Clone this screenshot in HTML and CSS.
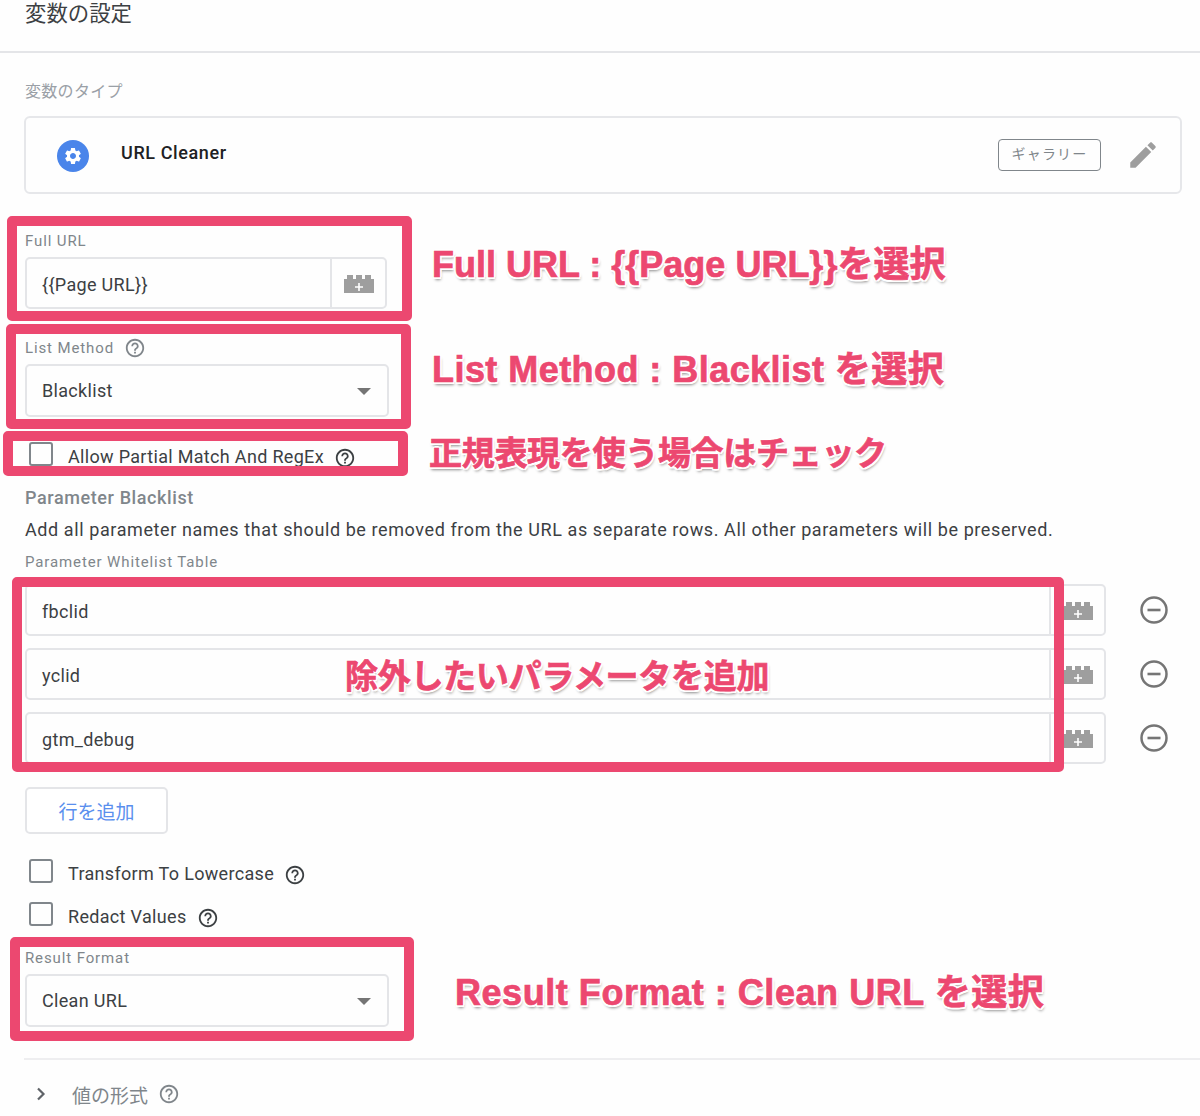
FILE: index.html
```html
<!DOCTYPE html>
<html>
<head>
    <title>変数の設定</title>
    <link rel="stylesheet" href="styles.css">
</head>
<body>
    <svg class="defs" width="0" height="0">
        <symbol id="help" viewBox="0 0 24 24"><path d="M11 18h2v-2h-2v2zm1-16C6.48 2 2 6.48 2 12s4.48 10 10 10 10-4.48 10-10S17.52 2 12 2zm0 18c-4.41 0-8-3.59-8-8s3.59-8 8-8 8 3.59 8 8-3.59 8-8 8zm0-14c-2.21 0-4 1.79-4 4h2c0-1.1.9-2 2-2s2 .9 2 2c0 2-3 1.75-3 5h2c0-2.25 3-2.5 3-5 0-2.21-1.79-4-4-4z"/></symbol>
        <symbol id="brick" viewBox="0 0 30 19"><path d="M0 5h3V1h6v4h3V1h6v4h3V1h6v4h3v14H0z"/><path d="M14.2 9h1.6v3.2H19v1.6h-3.2V17h-1.6v-3.2H11v-1.6h3.2z" fill="#fff"/></symbol>
        <symbol id="minus" viewBox="0 0 28 28"><circle cx="14" cy="14" r="12.5" fill="none" stroke="currentColor" stroke-width="2.5"/><path d="M7.5 14h13" stroke="currentColor" stroke-width="2.6"/></symbol>
    </svg>

    <div class="page">
        <header class="topbar">変数の設定</header>

        <div class="content">
            <div class="label type-label">変数のタイプ</div>
            <div class="type-card">
                <span class="type-icon">
                    <svg width="20" height="20" viewBox="0 0 24 24" fill="#fff"><path d="M19.14 12.94c.04-.3.06-.61.06-.94 0-.32-.02-.64-.07-.94l2.03-1.58c.18-.14.23-.41.12-.61l-1.92-3.32c-.12-.22-.37-.29-.59-.22l-2.39.96c-.5-.38-1.03-.7-1.62-.94l-.36-2.54c-.04-.24-.24-.41-.48-.41h-3.84c-.24 0-.43.17-.47.41l-.36 2.54c-.59.24-1.13.57-1.62.94l-2.39-.96c-.22-.08-.47 0-.59.22L2.74 8.87c-.12.21-.08.47.12.61l2.03 1.58c-.05.3-.09.63-.09.94s.02.64.07.94l-2.03 1.58c-.18.14-.23.41-.12.61l1.92 3.32c.12.22.37.29.59.22l2.39-.96c.5.38 1.03.7 1.62.94l.36 2.54c.05.24.24.41.48.41h3.84c.24 0 .44-.17.47-.41l.36-2.54c.59-.24 1.13-.56 1.62-.94l2.39.96c.22.08.47 0 .59-.22l1.92-3.32c.12-.22.07-.47-.12-.61l-2.01-1.58zM12 15.6c-1.98 0-3.6-1.62-3.6-3.6s1.62-3.6 3.6-3.6 3.6 1.62 3.6 3.6-1.62 3.6-3.6 3.6z"/></svg>
                </span>
                <span class="type-name">URL Cleaner</span>
                <span class="chip">ギャラリー</span>
                <svg class="pencil" width="34" height="34" viewBox="0 0 24 24" fill="#9e9e9e"><path d="M3 17.25V21h3.75L17.81 9.94l-3.75-3.75L3 17.25zM20.71 7.04c.39-.39.39-1.02 0-1.41l-2.34-2.34c-.39-.39-1.02-.39-1.41 0l-1.83 1.83 3.75 3.75 1.83-1.83z"/></svg>
            </div>

            <div class="label full-url-label">Full URL</div>
            <div class="input input-short">
                <span class="input-text">{{Page URL}}</span>
                <span class="brick-cell"><svg class="brick" width="30" height="19"><use href="#brick"/></svg></span>
            </div>

            <div class="label method-label">List Method <svg class="help help-gray" width="22" height="22"><use href="#help"/></svg></div>
            <div class="select">
                <span>Blacklist</span>
                <span class="caret"></span>
            </div>

            <label class="check partial-check">
                <span class="box"></span>
                <span class="check-text">Allow Partial Match And RegEx</span>
                <svg class="help" width="22" height="22"><use href="#help"/></svg>
            </label>

            <div class="section-title">Parameter Blacklist</div>
            <p class="section-desc">Add all parameter names that should be removed from the URL as separate rows. All other parameters will be preserved.</p>
            <div class="label table-label">Parameter Whitelist Table</div>

            <div class="rows">
                <div class="row">
                    <div class="input input-wide">
                        <span class="input-text">fbclid</span>
                        <span class="brick-cell"><svg class="brick" width="30" height="19"><use href="#brick"/></svg></span>
                    </div>
                    <svg class="minus" width="28" height="28"><use href="#minus"/></svg>
                </div>
                <div class="row">
                    <div class="input input-wide">
                        <span class="input-text">yclid</span>
                        <span class="brick-cell"><svg class="brick" width="30" height="19"><use href="#brick"/></svg></span>
                    </div>
                    <svg class="minus" width="28" height="28"><use href="#minus"/></svg>
                </div>
                <div class="row">
                    <div class="input input-wide">
                        <span class="input-text">gtm_debug</span>
                        <span class="brick-cell"><svg class="brick" width="30" height="19"><use href="#brick"/></svg></span>
                    </div>
                    <svg class="minus" width="28" height="28"><use href="#minus"/></svg>
                </div>
            </div>

            <button class="add-row">行を追加</button>

            <label class="check lower-check">
                <span class="box"></span>
                <span class="check-text">Transform To Lowercase</span>
                <svg class="help" width="22" height="22"><use href="#help"/></svg>
            </label>
            <label class="check redact-check">
                <span class="box"></span>
                <span class="check-text">Redact Values</span>
                <svg class="help" width="22" height="22"><use href="#help"/></svg>
            </label>

            <div class="label format-label">Result Format</div>
            <div class="select">
                <span>Clean URL</span>
                <span class="caret"></span>
            </div>

            <div class="divider"></div>

            <div class="format-row">
                <svg width="12" height="16" viewBox="0 0 12 16" fill="none" stroke="#5f6368" stroke-width="2.2"><path d="M3 2.5 8.5 8 3 13.5"/></svg>
                <span>値の形式</span>
                <svg class="help help-gray" width="22" height="22"><use href="#help"/></svg>
            </div>
        </div>

        <!-- annotations drawn on top of the screenshot -->
        <div class="mark mark-url"></div>
        <div class="mark mark-method"></div>
        <div class="mark mark-partial"></div>
        <div class="mark mark-rows"></div>
        <div class="mark mark-format"></div>

        <div class="note note-url">Full URL : {{Page URL}}を選択</div>
        <div class="note note-method">List Method : Blacklist を選択</div>
        <div class="note note-partial">正規表現を使う場合はチェック</div>
        <div class="note note-rows">除外したいパラメータを追加</div>
        <div class="note note-format">Result Format : Clean URL を選択</div>
    </div>
</body>
</html>
```

FILE: styles.css
```css
* {
    box-sizing: border-box;
}
html, body {
    margin: 0;
    background: #fefefe;
}
body {
    font-family: Roboto, "Noto Sans CJK JP", sans-serif;
    color: #3c4043;
    font-size: 18px;
    letter-spacing: 0.32px;
}
.defs {
    position: absolute;
}
.page {
    position: relative;
    height: 1116px;
    overflow: hidden;
}
.topbar {
    height: 53px;
    padding-left: 25px;
    font-size: 21.4px;
    letter-spacing: 0;
    line-height: 28px;
    border-bottom: 2px solid #e4e5e8;
}
.content {
    padding-left: 25px;
    padding-right: 18px;
}
.label {
    display: flex;
    align-items: center;
    height: 21px;
    font-size: 15px;
    color: #80868b;
    letter-spacing: 0.88px;
}
.type-label {
    margin-top: 26px;
    font-size: 16px;
    letter-spacing: 0.3px;
    color: #9aa0a6;
}
.type-card {
    display: flex;
    align-items: center;
    height: 78px;
    margin: 16px 0 0 -1px;
    padding: 0 20px 0 31px;
    border: 2px solid #e6e7ea;
    border-radius: 6px;
}
.type-icon {
    display: flex;
    align-items: center;
    justify-content: center;
    width: 32px;
    height: 32px;
    border-radius: 50%;
    background: #4a85ea;
    margin-top: 1px;
}
.type-name {
    margin-left: 32px;
    margin-top: -5px;
    font-weight: 500;
    letter-spacing: 0.6px;
    color: #202124;
}
.chip {
    margin-left: auto;
    width: 103px;
    height: 32px;
    line-height: 29px;
    text-align: center;
    font-size: 14px;
    letter-spacing: 1.2px;
    color: #80868b;
    border: 1.5px solid #80868b;
    border-radius: 4px;
}
.pencil {
    margin-left: 25px;
}
.full-url-label {
    margin-top: 36px;
}
.input {
    display: flex;
    height: 52px;
    margin-top: 6px;
    border: 2px solid #e4e5e8;
    border-radius: 5px;
}
.input-short {
    width: 362px;
}
.input-wide {
    width: 1081px;
    margin-top: 0;
}
.input-text {
    flex: 1;
    padding: 2px 0 0 15px;
    line-height: 48px;
}
.brick-cell {
    display: flex;
    align-items: center;
    justify-content: center;
    width: 55px;
    border-left: 2px solid #e4e5e8;
}
.brick {
    fill: #9e9e9e;
}
.method-label {
    margin-top: 28px;
}
.help {
    flex: none;
    fill: #3c4043;
    margin-left: 10px;
    margin-top: 3px;
}
.help-gray {
    fill: #80868b;
    margin-top: 0;
}
.select {
    display: flex;
    align-items: center;
    justify-content: space-between;
    width: 364px;
    height: 53px;
    margin-top: 6px;
    padding: 0 16px 0 15px;
    border: 2px solid #e4e5e8;
    border-radius: 5px;
}
.caret {
    width: 0;
    height: 0;
    border-left: 7px solid transparent;
    border-right: 7px solid transparent;
    border-top: 7px solid #757575;
    margin-top: 2px;
}
.check {
    display: flex;
    align-items: center;
    height: 24px;
    padding-left: 4px;
    line-height: 24px;
}
.check-text {
    margin-top: 2px;
}
.box {
    flex: none;
    width: 24px;
    height: 24px;
    margin-right: 15px;
    margin-top: -4px;
    border: 2.5px solid #80868b;
    border-radius: 3px;
}
.partial-check {
    margin-top: 27px;
}
.section-title {
    margin-top: 18px;
    height: 24px;
    line-height: 24px;
    font-weight: 500;
    letter-spacing: 0.6px;
    color: #80868b;
}
.section-desc {
    margin: 8px 0 0;
    height: 24px;
    line-height: 24px;
    letter-spacing: 0.59px;
    white-space: nowrap;
}
.table-label {
    margin-top: 9px;
}
.rows {
    display: flex;
    flex-direction: column;
    gap: 12px;
    margin-top: 12px;
}
.row {
    display: flex;
    align-items: center;
}
.minus {
    color: #757575;
    margin-left: 34px;
}
.add-row {
    display: block;
    width: 143px;
    height: 47px;
    margin-top: 23px;
    padding: 0;
    background: #fff;
    border: 2px solid #e4e5e8;
    border-radius: 5px;
    font-family: inherit;
    font-size: 19px;
    color: #5a8fee;
}
.lower-check {
    margin-top: 27px;
}
.redact-check {
    margin-top: 19px;
}
.format-label {
    margin-top: 19px;
}
.divider {
    height: 2px;
    margin: 31px -18px 0 -1px;
    background: #eeeef0;
}
.format-row {
    display: flex;
    align-items: center;
    height: 24px;
    margin-top: 22px;
    font-size: 19px;
    letter-spacing: 0;
    color: #80868b;
}
.format-row svg:first-child {
    margin-left: 10px;
    margin-right: 25px;
}
.mark {
    position: absolute;
    border: 10px solid #ec4870;
    border-radius: 5px;
}
.mark-url {
    left: 7px;
    top: 216px;
    width: 405px;
    height: 105px;
}
.mark-method {
    left: 6px;
    top: 324px;
    width: 405px;
    height: 105px;
}
.mark-partial {
    left: 3px;
    top: 431px;
    width: 405px;
    height: 45px;
}
.mark-rows {
    left: 12px;
    top: 577px;
    width: 1052px;
    height: 195px;
}
.mark-format {
    left: 10px;
    top: 937px;
    width: 404px;
    height: 104px;
}
.note {
    position: absolute;
    font-family: "Liberation Sans", "Noto Sans CJK JP", sans-serif;
    font-weight: 700;
    font-size: 36px;
    line-height: 44px;
    letter-spacing: 0;
    white-space: nowrap;
    color: #ec4870;
    -webkit-text-stroke: 0.7px #ec4870;
    text-shadow: 2px 0 #fff, -2px 0 #fff, 0 2px #fff, 0 -2px #fff, 1.5px 1.5px #fff, -1.5px 1.5px #fff, 1.5px -1.5px #fff, -1.5px -1.5px #fff, 1px 3px 3px rgba(0, 0, 0, 0.45);
}
.note-url {
    left: 432px;
    top: 243px;
}
.note-method {
    left: 432px;
    top: 348px;
    letter-spacing: 0.45px;
}
.note-partial {
    left: 429px;
    top: 432px;
    font-size: 33px;
    letter-spacing: -0.3px;
}
.note-rows {
    left: 345px;
    top: 655px;
    font-size: 33px;
    letter-spacing: -0.3px;
}
.note-format {
    left: 455px;
    top: 971px;
    letter-spacing: 0.55px;
}
```
